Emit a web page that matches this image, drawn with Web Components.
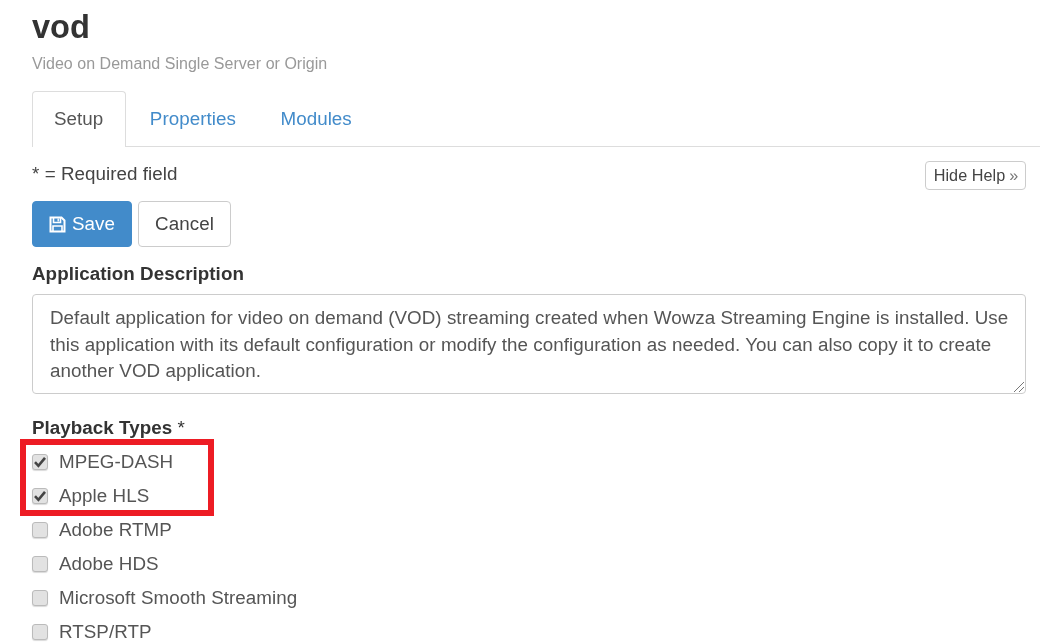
<!DOCTYPE html>
<html>
<head>
<meta charset="utf-8">
<title>vod</title>
<style>
  html, body { margin: 0; background: #fff; }
  body { font-family: "Liberation Sans", Arial, sans-serif; color: #333; overflow: hidden; height: 644px; }
</style>
</head>
<body>
<app-page>
  <span slot="title">vod</span>
  <span slot="subtitle">Video on Demand Single Server or Origin</span>
  <tab-bar>
    <tab-item active>Setup</tab-item>
    <tab-item style="margin-left:2px">Properties</tab-item>
    <tab-item>Modules</tab-item>
  </tab-bar>
  <setup-form>
    <check-row checked>MPEG-DASH</check-row>
    <check-row checked>Apple HLS</check-row>
    <check-row>Adobe RTMP</check-row>
    <check-row>Adobe HDS</check-row>
    <check-row>Microsoft Smooth Streaming</check-row>
    <check-row>RTSP/RTP</check-row>
  </setup-form>
</app-page>

<script>
class AppPage extends HTMLElement {
  constructor() {
    super();
    this.attachShadow({ mode: "open" });
    this.shadowRoot.innerHTML = `
      <style>
        :host { display: block; padding: 9px 14px 0 32px; filter: blur(.35px); }
        h1 { margin: 0; font-size: 32.6px; line-height: 36px; font-weight: bold; color: #333; }
        p { margin: 9px 0 17px; font-size: 16px; letter-spacing: .03px; line-height: 20px; color: #999; }
      </style>
      <h1><slot name="title"></slot></h1>
      <p><slot name="subtitle"></slot></p>
      <slot></slot>
    `;
  }
}

class TabBar extends HTMLElement {
  constructor() {
    super();
    this.attachShadow({ mode: "open" });
    this.shadowRoot.innerHTML = `
      <style>
        :host { display: flex; height: 55px; margin-right: -14px; border-bottom: 1px solid #ddd; }
      </style>
      <slot></slot>
    `;
  }
}

class TabItem extends HTMLElement {
  constructor() {
    super();
    this.attachShadow({ mode: "open" });
    this.shadowRoot.innerHTML = `
      <style>
        :host {
          display: block; height: 56px; box-sizing: border-box; padding: 0 21.5px 0 21px;
          font-size: 18.8px; letter-spacing: .05px; line-height: 54px; color: #428bca;
          border: 1px solid transparent; border-bottom: 0; border-radius: 4px 4px 0 0;
          background: transparent;
        }
        :host([active]) { color: #555; border-color: #ddd; background: #fff; }
      </style>
      <slot></slot>
    `;
  }
}

class SaveButton extends HTMLElement {
  constructor() {
    super();
    this.attachShadow({ mode: "open" });
    this.shadowRoot.innerHTML = `
      <style>
        :host {
          display: inline-flex; align-items: center; justify-content: center; gap: 6px;
          box-sizing: border-box; height: 46px; width: 100px; border-radius: 4px;
          background: #428bca; border: 1px solid #428bca; color: #fff; font-size: 18.8px;
        }
        svg { width: 17px; height: 17px; display: block; }
      </style>
      <svg viewBox="0 0 17 17" fill="none" stroke="#fff" stroke-width="2">
        <path d="M1.5 1.5h11l3 3v11h-14z"/>
        <path d="M4.5 2v4.5h7V2" stroke-width="1.6"/>
        <path d="M4 15.5V10h9v5.5" stroke-width="1.6"/>
        <path d="M9.2 2.5v3" stroke-width="1.4"/>
      </svg>
      <slot></slot>
    `;
  }
}

class PlainButton extends HTMLElement {
  constructor() {
    super();
    this.attachShadow({ mode: "open" });
    this.shadowRoot.innerHTML = `
      <style>
        :host {
          display: inline-flex; align-items: center; justify-content: center;
          box-sizing: border-box; border: 1px solid #ccc; border-radius: 4px;
          background: #fff; color: #444;
          height: 46px; width: 93px; font-size: 18.8px;
        }
        :host([small]) { height: 29px; width: 101px; font-size: 16.2px; gap: 4px; padding-left: 1px; }
      </style>
      <slot></slot>
    `;
  }
}

class CheckRow extends HTMLElement {
  constructor() {
    super();
    this.attachShadow({ mode: "open" });
    const checked = this.hasAttribute("checked");
    this.shadowRoot.innerHTML = `
      <style>
        :host { display: flex; align-items: center; gap: 11px; height: 34px; font-size: 18.8px; letter-spacing: .05px; color: #555; }
        .box {
          width: 16px; height: 16px; box-sizing: border-box; flex: none;
          border: 1px solid #bbb; border-radius: 3px; background: #e2e2e2;
          box-shadow: 0 1px 1px rgba(0,0,0,.15); margin-bottom: 2px;
          display: flex; align-items: center; justify-content: center;
        }
        svg { width: 12px; height: 12px; display: block; }
        .txt { margin-bottom: 2px; }
      </style>
      <span class="box">${checked ? '<svg viewBox="0 0 12 12"><path d="M1 6.2l3.4 3.6L11 1.8" fill="none" stroke="#444" stroke-width="2.6"/></svg>' : ""}</span>
      <span class="txt"><slot></slot></span>
    `;
  }
}

class SetupForm extends HTMLElement {
  constructor() {
    super();
    this.attachShadow({ mode: "open" });
    this.shadowRoot.innerHTML = `
      <style>
        :host { display: block; position: relative; font-size: 18.8px; letter-spacing: .05px; }
        .top { display: flex; justify-content: space-between; align-items: flex-start; padding-top: 14px; height: 40px; }
        .req { line-height: 26px; color: #444; }
        .actions { display: flex; gap: 6px; }
        .lbl { font-weight: bold; color: #333; line-height: 24px; }
        .lbl span { font-weight: normal; }
        .desc {
          margin-top: 8px; height: 100px; box-sizing: border-box; position: relative;
          border: 1px solid #ccc; border-radius: 4px; padding: 10px 10px 0 17px;
          line-height: 26.7px; color: #555;
        }
        .grip { position: absolute; right: 0; bottom: 0; width: 12px; height: 12px; display: block; }
        .types { margin-top: 22px; }
        .list { margin-top: 6px; }
        .mark { position: absolute; left: -12px; top: 292px; width: 194px; height: 77px; box-sizing: border-box; border: 6px solid #ed1c24; }
      </style>
      <div class="top">
        <span class="req">* = Required field</span>
        <plain-button small>Hide Help <span style="color:#777">»</span></plain-button>
      </div>
      <div class="actions">
        <save-button>Save</save-button>
        <plain-button>Cancel</plain-button>
      </div>
      <div class="lbl" style="margin-top:15px">Application Description</div>
      <div class="desc">Default application for video on demand (VOD) streaming created when Wowza Streaming Engine is installed. Use this application with its default configuration or modify the configuration as needed. You can also copy it to create another VOD application.<svg class="grip" viewBox="0 0 12 12"><path d="M1 11L11 1M6 11l5-5" stroke="#777" stroke-width="1"/></svg></div>
      <div class="lbl types">Playback Types <span>*</span></div>
      <div class="list"><slot></slot></div>
      <div class="mark"></div>
    `;
  }
}

customElements.define("app-page", AppPage);
customElements.define("tab-bar", TabBar);
customElements.define("tab-item", TabItem);
customElements.define("save-button", SaveButton);
customElements.define("plain-button", PlainButton);
customElements.define("check-row", CheckRow);
customElements.define("setup-form", SetupForm);
</script>
</body>
</html>
